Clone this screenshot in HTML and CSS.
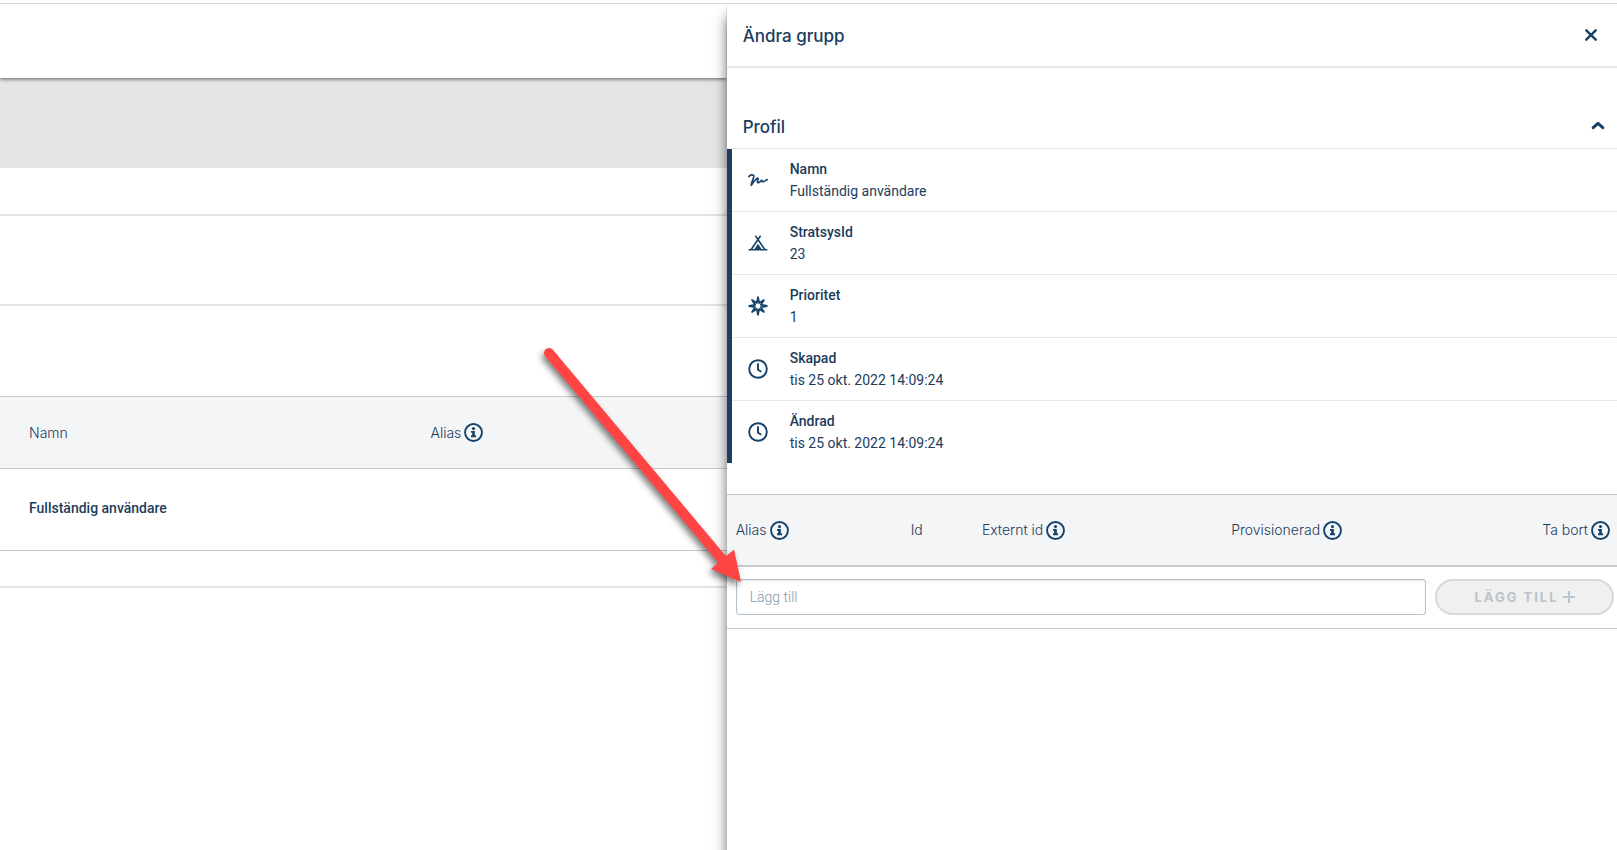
FILE: index.html
```html
<!DOCTYPE html>
<html lang="sv">
<head>
<meta charset="utf-8">
<title>Ändra grupp</title>
<link rel="stylesheet" href="styles.css">
</head>
<body>
<svg class="defs" aria-hidden="true">
  <symbol id="info" viewBox="0 0 20 20"><circle cx="10" cy="10" r="8.9" fill="none" stroke="currentColor" stroke-width="2"/><circle cx="10" cy="5.9" r="1.6" fill="currentColor"/><path d="M7.400 8.300h4v4.700h1.300v1.900H7.400V13h1.200v-2.800H7.400z" fill="currentColor"/></symbol>
  <symbol id="clock" viewBox="0 0 20 20"><circle cx="10" cy="10" r="8.8" fill="none" stroke="currentColor" stroke-width="1.9"/><path d="M10 4.300v6.400l3.300 2.100" fill="none" stroke="currentColor" stroke-width="1.900"/></symbol>
</svg>
<div class="app">
  <main class="page">
    <header class="topbar"></header>
    <div class="banner"></div>
    <div class="strip strip-small"></div>
    <div class="strip"></div>
    <section class="list">
      <table class="groups">
        <colgroup><col class="g-name"><col></colgroup>
        <thead><tr><th>Namn</th><th><span class="label">Alias <svg class="info"><use href="#info"/></svg></span></th></tr></thead>
        <tbody><tr><td>Fullständig användare</td><td></td></tr></tbody>
      </table>
    </section>
  </main>
  <aside class="panel">
    <header class="panel-head">
      <h1>Ändra grupp</h1>
      <button class="icon-button" type="button" aria-label="Stäng"><svg width="12" height="12" viewBox="0 0 12 12"><path d="M1.300 1.300l9.400 9.400M10.700 1.300l-9.400 9.400" stroke="currentColor" stroke-width="2.400" stroke-linecap="round"/></svg></button>
    </header>
    <section>
      <div class="profile-head">
        <h2>Profil</h2>
        <button class="icon-button" type="button" aria-label="Dölj profil"><svg width="14" height="10" viewBox="0 0 14 10"><path d="M2.200 6.700L7 2.400l4.800 4.300" fill="none" stroke="currentColor" stroke-width="3" stroke-linecap="round" stroke-linejoin="round"/></svg></button>
      </div>
      <dl class="facts">
        <div class="fact">
          <svg class="fact-icon" viewBox="0 0 20 20"><path d="M.9 6.600C2 4.800 4.800 4.300 5.700 5.500c.9 1.500-2.200 6-2.500 9.800C5.500 12 7.600 8.900 9.900 8c.8 1.100-1 3-.3 4.600 1.500.7 2.800-1.500 4.100-2.300.5.3.2 1.500 1.200 1.500 1.500-.2 3-1.500 4.300-2.200" fill="none" stroke="currentColor" stroke-width="1.700" stroke-linecap="round" stroke-linejoin="round"/></svg>
          <div><dt>Namn</dt><dd>Fullständig användare</dd></div>
        </div>
        <div class="fact">
          <svg class="fact-icon" viewBox="0 0 20 20"><path d="M.6 16.800h18.800M7.400 2.800l9.600 14M12.600 2.800l-9.600 14" fill="none" stroke="currentColor" stroke-width="1.600"/><path d="M10 10.800l4 6H6z" fill="currentColor"/></svg>
          <div><dt>StratsysId</dt><dd>23</dd></div>
        </div>
        <div class="fact">
          <svg class="fact-icon" viewBox="0 0 20 20"><path d="M10 1.200l1.200 5.900 4.700-3-3 4.700 5.900 1.200-5.900 1.200 3 4.700-4.700-3L10 18.800l-1.200-5.900-4.700 3 3-4.700L1.200 10l5.900-1.200-3-4.700 4.700 3z" fill="none" stroke="currentColor" stroke-width="1.800" stroke-linejoin="round"/></svg>
          <div><dt>Prioritet</dt><dd>1</dd></div>
        </div>
        <div class="fact">
          <svg class="fact-icon"><use href="#clock"/></svg>
          <div><dt>Skapad</dt><dd>tis 25 okt. 2022 14:09:24</dd></div>
        </div>
        <div class="fact">
          <svg class="fact-icon"><use href="#clock"/></svg>
          <div><dt>Ändrad</dt><dd>tis 25 okt. 2022 14:09:24</dd></div>
        </div>
      </dl>
    </section>
    <table class="aliases">
      <colgroup><col class="a-alias"><col class="a-id"><col class="a-ext"><col><col class="a-del"></colgroup>
      <thead><tr>
        <th><span class="label">Alias <svg class="info"><use href="#info"/></svg></span></th>
        <th>Id</th>
        <th><span class="label">Externt id <svg class="info"><use href="#info"/></svg></span></th>
        <th><span class="label">Provisionerad <svg class="info"><use href="#info"/></svg></span></th>
        <th><span class="label label-end">Ta bort <svg class="info"><use href="#info"/></svg></span></th>
      </tr></thead>
      <tbody><tr><td colspan="5">
        <form class="add">
          <input type="text" placeholder="Lägg till" aria-label="Lägg till alias">
          <button type="submit" disabled>LÄGG TILL <svg width="12" height="12" viewBox="0 0 12 12"><path d="M6 0v12M0 6h12" stroke="currentColor" stroke-width="2"/></svg></button>
        </form>
      </td></tr></tbody>
    </table>
    <svg class="arrow" width="216" height="256" viewBox="0 0 216 256" aria-hidden="true">
      <path d="M19 13L196 224" stroke="#ff4444" stroke-width="10" stroke-linecap="round"/>
      <path d="M211 242L181 229 204 209.500z" fill="#ff4444"/>
    </svg>
  </aside>
</div>
</body>
</html>
```
FILE: styles.css
```css
* { box-sizing: border-box; }
body {
  margin: 0;
  background: #fff;
  color: #1c3c5c;
  font: 14px/22px Roboto, sans-serif;
}
h1, h2, dl, dd { margin: 0; }
.defs { position: absolute; width: 0; height: 0; }
.app {
  display: flex;
  min-height: 100vh;
  padding-top: 3px;
  overflow: hidden;
}
.page {
  flex: 1;
  min-width: 0;
  border-top: 1px solid #dadada;
}
.topbar {
  position: relative;
  height: 74px;
  background: #fff;
  box-shadow: 0 1px 4px rgba(0, 0, 0, .6);
  clip-path: inset(0 0 -8px 0);
}
.banner { height: 90px; background: #e5e5e5; }
.strip { height: 90px; border-bottom: 2px solid #e4e4e4; }
.strip-small { height: 48px; }
.list { padding: 90px 0 35px; border-bottom: 2px solid #e4e4e4; }
table { width: 100%; border-collapse: separate; border-spacing: 0; table-layout: fixed; }
th {
  height: 73px;
  padding: 0 0 0 9px;
  background: #f3f5f7;
  border-top: 1px solid #c8c8c8;
  font: 300 14px/20px Inter, sans-serif;
  text-align: left;
  white-space: nowrap;
}
td { padding: 0; border-bottom: 1px solid #c8c8c8; }
.g-name { width: 58%; }
.groups th { border-bottom: 1px solid #c8c8c8; }
.groups th:first-child, .groups td:first-child { padding-left: 29px; }
.groups td { height: 82px; padding-bottom: 4px; font-weight: 500; }
.label { display: flex; align-items: center; gap: 3px; }
.label-end { justify-content: flex-end; padding-right: 7px; }
.info { width: 19px; height: 19px; color: #14426a; }

.panel {
  position: relative;
  width: calc(55% + 1px);
  background: #fff;
  border-top: 1px solid #dadada;
  box-shadow: 0 14px 12px rgba(0, 0, 0, .6);
}
.panel-head, .profile-head {
  display: flex;
  align-items: center;
  justify-content: space-between;
  padding-left: 16px;
}
.panel-head { height: 64px; padding-right: 20px; border-bottom: 2px solid #e6e6e6; }
.profile-head { height: 81px; padding: 36px 12px 0 16px; border-bottom: 1px solid #e6e6e6; }
h1, h2 { padding-top: 2px; font: 500 17px/24px Inter, sans-serif; }
.icon-button {
  display: flex;
  padding: 0;
  border: 0;
  background: none;
  color: #14426a;
  cursor: pointer;
}
.facts { border-left: 5px solid #1e3d60; }
.fact {
  display: flex;
  align-items: center;
  gap: 22px;
  height: 63px;
  padding-left: 16px;
  border-bottom: 1px solid #e6e6e6;
}
.fact:last-child { height: 62px; border-bottom: 0; }
.fact-icon { width: 20px; height: 20px; color: #14426a; }
dt { font-weight: 500; }

.aliases { margin-top: 31px; }
.a-alias { width: 175px; }
.a-id { width: 8%; }
.a-ext { width: 28%; }
.a-del { width: 10%; }
.aliases th { border-bottom: 2px solid #c8c8c8; }
.add { display: flex; gap: 9px; padding: 12px 3px 13px 9px; }
.add input {
  flex: 1;
  min-width: 0;
  height: 36px;
  padding: 0 13px;
  border: 1px solid #b4c0ca;
  border-radius: 3px;
  box-shadow: inset 0 1px 2px rgba(0, 0, 0, .1);
  font: 300 14px/20px Roboto, sans-serif;
}
.add input::placeholder { color: #7f99ae; opacity: 1; }
.add button {
  display: flex;
  align-items: center;
  justify-content: center;
  gap: 4px;
  width: 179px;
  height: 36px;
  border: 2px solid #d9d9d9;
  border-radius: 18px;
  background: #f0f0f0;
  color: #b9c4ce;
  font: 700 13px/20px Inter, sans-serif;
  letter-spacing: 2px;
}
.arrow {
  position: absolute;
  top: 336px;
  left: -197px;
  fill: none;
  filter: drop-shadow(-2px 4px 3px rgba(0, 0, 0, .5));
}
```
